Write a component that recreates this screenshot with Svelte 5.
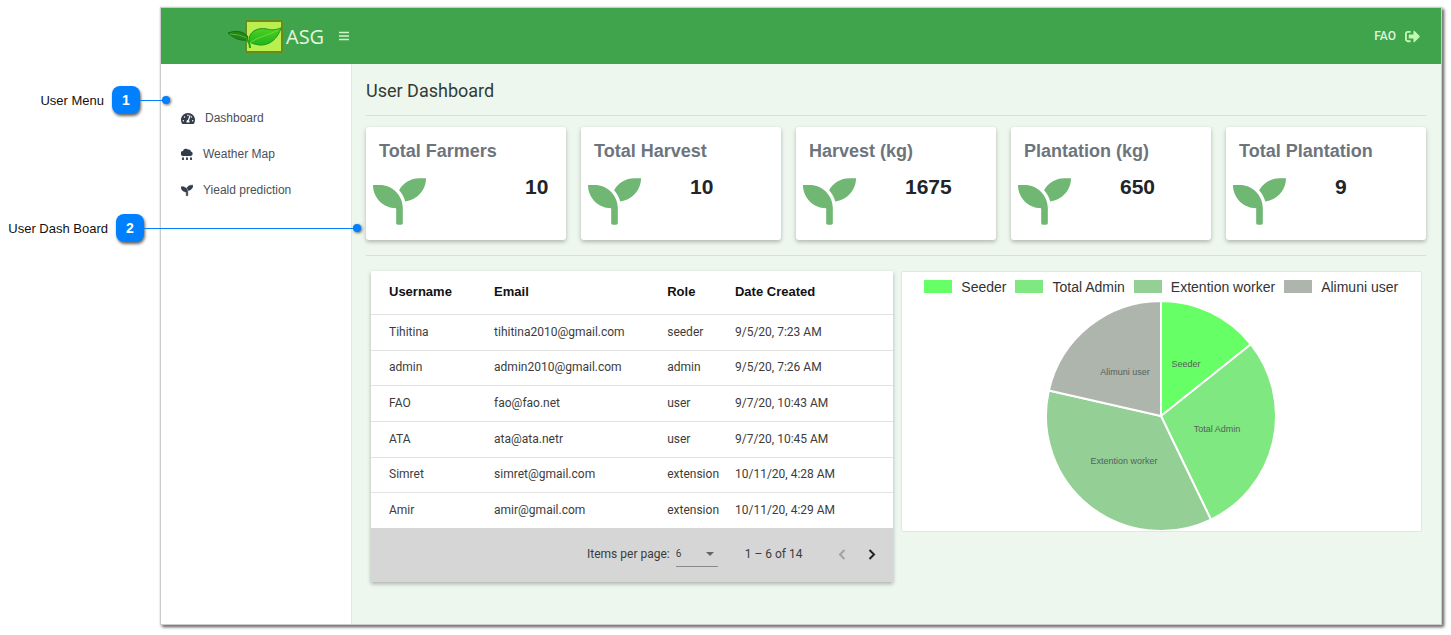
<script>
  const seedling =
    'M64 96H0c0 123.700 100.300 224 224 224v144c0 8.800 7.200 16 16 16h32c8.800 0 16-7.200 16-16V320C288 196.300 187.700 96 64 96zm384-64c-84.200 0-157.400 46.500-195.700 115.200 27.700 30.200 48.200 66.900 59 107.600C424 243.100 512 147.900 512 32h-64z';

  const stats = [
    { title: 'Total Farmers', value: '10', wide: true },
    { title: 'Total Harvest', value: '10' },
    { title: 'Harvest (kg)', value: '1675' },
    { title: 'Plantation (kg)', value: '650' },
    { title: 'Total Plantation', value: '9' }
  ];

  const users = [
    ['Tihitina', 'tihitina2010@gmail.com', 'seeder', '9/5/20, 7:23 AM'],
    ['admin', 'admin2010@gmail.com', 'admin', '9/5/20, 7:26 AM'],
    ['FAO', 'fao@fao.net', 'user', '9/7/20, 10:43 AM'],
    ['ATA', 'ata@ata.netr', 'user', '9/7/20, 10:45 AM'],
    ['Simret', 'simret@gmail.com', 'extension', '10/11/20, 4:28 AM'],
    ['Amir', 'amir@gmail.com', 'extension', '10/11/20, 4:29 AM']
  ];

  const groups = [
    { name: 'Seeder', count: 2, color: '#66ff66', x: 140, y: 66 },
    { name: 'Total Admin', count: 4, color: '#80e880', x: 171, y: 131 },
    { name: 'Extention worker', count: 5, color: '#94cf96', x: 78, y: 163 },
    { name: 'Alimuni user', count: 3, color: '#adb5ad', x: 79, y: 74 }
  ];

  const total = groups.reduce((sum, g) => sum + g.count, 0);
  const point = (n) => {
    const a = (n / total) * Math.PI * 2;
    return `${115 + 115 * Math.sin(a)} ${115 - 115 * Math.cos(a)}`;
  };
  let seen = 0;
  const slices = groups.map((g) => {
    const from = seen;
    seen += g.count;
    return { ...g, d: `M115 115L${point(from)}A115 115 0 0 1 ${point(seen)}Z` };
  });

  let pageSize = $state('6');
</script>

<div class="page">
  <div class="app">
    <header>
      <a class="logo" href="#home">
        <svg width="58" height="36" viewBox="0 0 58 36" aria-hidden="true">
          <defs>
            <linearGradient id="leaf" x1="0" y1="0" x2="0" y2="1">
              <stop offset="0" stop-color="#4fd022" />
              <stop offset="1" stop-color="#1fb51c" />
            </linearGradient>
          </defs>
          <rect x="19" y="3" width="36" height="31" rx="1" fill="#b9ef4f" stroke="#6b8a1e" stroke-width="2" />
          <path d="M1 15C8 12 17 13 21 19L20 22C12 23 7 20 1 15Z" fill="#24851c" stroke="#17701a" />
          <path d="M3 16Q12 16 20 20" fill="none" stroke="#56b62d" />
          <path d="M22 24C21 14 30 9 40 11C47 13 50 11 54 10C51 20 43 28 32 27Q26 26 22 24Z" fill="url(#leaf)" stroke="#22961f" />
          <path d="M23 25C30 19 40 18 51 12" fill="none" stroke="#6bdc3e" />
          <path d="M19 21Q23 24 23 30" fill="none" stroke="#1fa51c" stroke-width="2" />
        </svg>
        <span>ASG</span>
      </a>
      <button class="burger" aria-label="Toggle menu">
        <svg width="10" height="10" viewBox="0 0 10 10"><path d="M0 1.500h10M0 5h10M0 8.500h10" stroke="#d3f7cb" stroke-width="1.300" /></svg>
      </button>
      <a class="account" href="#logout">
        FAO
        <svg width="15" height="15" viewBox="0 0 512 512" aria-hidden="true"><path fill="#c3fab0" d="M497 273L329 441c-15 15-41 4.500-41-17v-96H152c-13.300 0-24-10.700-24-24v-96c0-13.300 10.700-24 24-24h136V88c0-21.400 25.900-32 41-17l168 168c9.300 9.400 9.300 24.600 0 34zM192 436v-40c0-6.600-5.400-12-12-12H96c-17.700 0-32-14.300-32-32V160c0-17.700 14.300-32 32-32h84c6.600 0 12-5.400 12-12V76c0-6.600-5.400-12-12-12H96c-53 0-96 43-96 96v192c0 53 43 96 96 96h84c6.600 0 12-5.400 12-12z" /></svg>
      </a>
    </header>

    <div class="body">
      <nav>
        <a href="#dashboard">
          <svg width="14" height="13" viewBox="0 0 576 512" aria-hidden="true"><path d="M288 32C128.940 32 0 160.940 0 320c0 52.800 14.250 102.260 39.060 144.800 5.610 9.620 16.300 15.200 27.440 15.200h443c11.140 0 21.830-5.580 27.440-15.200C561.750 422.260 576 372.800 576 320c0-159.060-128.940-288-288-288zm0 64c14.710 0 26.580 10.130 30.320 23.650-1.110 2.260-2.640 4.230-3.450 6.670l-9.220 27.670c-5.130 3.490-10.970 6.010-17.640 6.010-17.670 0-32-14.330-32-32S270.330 96 288 96zM96 384c-17.670 0-32-14.330-32-32s14.330-32 32-32 32 14.330 32 32-14.330 32-32 32zm48-160c-17.670 0-32-14.330-32-32s14.330-32 32-32 32 14.330 32 32-14.330 32-32 32zm246.770-72.410l-61.330 184C343.130 347.330 352 364.540 352 384c0 11.720-3.380 22.550-8.880 32H232.880c-5.500-9.450-8.880-20.280-8.880-32 0-33.940 26.500-61.430 59.900-63.590l61.340-184.010c4.170-12.560 17.730-19.450 30.360-15.170 12.570 4.190 19.350 17.790 15.170 30.360zm14.660 57.200l15.520-46.550c3.470-1.290 7.130-2.230 11.050-2.230 17.670 0 32 14.330 32 32s-14.330 32-32 32c-11.380-.010-20.890-6.280-26.570-15.220zM480 384c-17.670 0-32-14.330-32-32s14.330-32 32-32 32 14.330 32 32-14.330 32-32 32z" /></svg>
          Dashboard
        </a>
        <a href="#weather">
          <svg width="12" height="13" viewBox="0 0 24 26" aria-hidden="true">
            <path d="M5 16A5 5 0 0 1 4 6A6 6 0 0 1 14 3A5 5 0 0 1 20 7A4.600 4.600 0 0 1 19.500 16Z" />
            <path d="M4 17l2 4a2.200 2.200 0 1 1-4 0zM12 17l2 4a2.200 2.200 0 1 1-4 0zM20 17l2 4a2.200 2.200 0 1 1-4 0z" />
          </svg>
          Weather Map
        </a>
        <a href="#prediction">
          <svg width="12" height="13" viewBox="0 0 512 512" aria-hidden="true"><path d={seedling} stroke="#323c4b" stroke-width="24" /></svg>
          Yieald prediction
        </a>
      </nav>

      <main>
        <h1>User Dashboard</h1>
        <section class="stats">
          {#each stats as s}
            <article class="card">
              <h2>{s.title}</h2>
              <div class="figure">
                <svg width="53" height="53" viewBox="0 0 512 512" aria-hidden="true"><path d={seedling} /></svg>
                <strong class:wide={s.wide}>{s.value}</strong>
              </div>
            </article>
          {/each}
        </section>

        <section class="panels">
          <div class="users">
            <table>
              <colgroup><col class="c1" /><col class="c2" /><col class="c3" /><col /></colgroup>
              <thead>
                <tr><th>Username</th><th>Email</th><th>Role</th><th>Date Created</th></tr>
              </thead>
              <tbody>
                {#each users as row}
                  <tr>{#each row as cell}<td>{cell}</td>{/each}</tr>
                {/each}
              </tbody>
            </table>
            <div class="pager">
              <label for="size">Items per page:</label>
              <span class="select">
                <select id="size" bind:value={pageSize}>
                  <option>6</option>
                  <option>12</option>
                </select>
                <svg width="8" height="4" viewBox="0 0 8 4" aria-hidden="true"><path d="M0 0h8L4 4z" /></svg>
              </span>
              <span class="range">1 – 6 of 14</span>
              <button aria-label="Previous page" disabled>
                <svg width="8" height="11" viewBox="0 0 8 11"><path d="M6.500 1L2 5.500L6.500 10" /></svg>
              </button>
              <button aria-label="Next page">
                <svg width="8" height="11" viewBox="0 0 8 11"><path d="M1.500 1L6 5.500L1.500 10" /></svg>
              </button>
            </div>
          </div>

          <figure class="chart">
            <ul>
              {#each groups as g}
                <li><i style:background={g.color}></i>{g.name}</li>
              {/each}
            </ul>
            <svg width="230" height="230" viewBox="0 0 230 230" role="img" aria-label="Users by role">
              {#each slices as s}
                <path d={s.d} fill={s.color} />
              {/each}
              {#each slices as s}
                <text x={s.x} y={s.y}>{s.name}</text>
              {/each}
            </svg>
          </figure>
        </section>
      </main>
    </div>
  </div>

  <div class="callout menu"><span>User Menu</span><b>1</b><i></i></div>
  <div class="callout board"><span>User Dash Board</span><b>2</b><i></i></div>
</div>

<style>
  .page {
    position: relative;
    box-sizing: border-box;
    min-height: 100vh;
    display: flex;
    padding: 8px 10px 11px 161px;
    background: #fff;
    font-family: "Liberation Sans", Arial, sans-serif;
  }
  .app {
    flex: 1;
    min-width: 0;
    display: flex;
    flex-direction: column;
    box-shadow: 0 0 1px 1px #ccc, 2px 2px 3px 1px #555;
  }
  a { color: inherit; text-decoration: none; }
  button { border: 0; padding: 0; background: none; font: inherit; }
  svg { flex: none; display: block; }

  header {
    height: 56px;
    display: flex;
    align-items: center;
    padding: 0 21px 0 66px;
    background: #40a44d;
  }
  .logo {
    display: flex;
    align-items: center;
    gap: 1px;
    color: #e2f8df;
    font-family: "Open Sans", sans-serif;
    font-size: 20px;
    font-weight: 500;
  }
  .burger { margin-left: 15px; }
  .account {
    margin-left: auto;
    display: flex;
    align-items: center;
    gap: 9px;
    color: #def5dc;
    font-family: Roboto, sans-serif;
    font-size: 12px;
    font-weight: 500;
  }

  .body { flex: 1; display: flex; background: #edf7ee; }
  nav {
    box-sizing: border-box;
    width: 191px;
    padding: 36px 20px;
    background: #fff;
    border-right: 1px solid #dfe7e0;
    color: #4a4f5a;
    font-size: 12px;
  }
  nav a { display: flex; align-items: center; gap: 10px; height: 36px; }
  nav svg { fill: #323c4b; }

  main { flex: 1; min-width: 0; padding: 0 15px 42px 14px; }
  h1 {
    margin: 0;
    height: 51px;
    line-height: 53px;
    border-bottom: 1px solid #d6e0d7;
    color: #333b36;
    font-family: Roboto, sans-serif;
    font-size: 18px;
    font-weight: 400;
  }
  .stats {
    display: grid;
    grid-template-columns: repeat(5, 1fr);
    gap: 15px;
    padding: 11px 0 15px;
    border-bottom: 1px solid #d6e0d7;
  }
  .card {
    box-sizing: border-box;
    height: 113px;
    padding: 13px 7px;
    border-radius: 3px;
    background: #fff;
    box-shadow: 0 2px 4px rgba(0, 0, 0, .26);
  }
  h2 {
    margin: 0 6px;
    line-height: 22px;
    color: #6c757d;
    font-size: 18px;
    white-space: nowrap;
  }
  .figure { display: flex; padding-top: 13px; }
  .figure svg { fill: #6fb773; }
  strong { margin-left: 49px; color: #212529; font-size: 21px; line-height: 24px; }
  strong.wide { margin-left: 99px; }

  .panels {
    display: grid;
    grid-template-columns: 1fr 1fr;
    align-items: start;
    gap: 8px;
    padding: 15px 4px 0 5px;
  }
  .users {
    background: #fff;
    box-shadow: 0 2px 4px rgba(0, 0, 0, .28);
    font-family: Roboto, sans-serif;
    font-size: 12px;
    color: #3c3c3c;
  }
  table { width: 100%; table-layout: fixed; border-collapse: separate; border-spacing: 0; }
  .c1 { width: 23.6%; }
  .c2 { width: 33.2%; }
  .c3 { width: 13%; }
  th, td { box-sizing: border-box; padding: 0; text-align: left; white-space: nowrap; border-bottom: 1px solid #e2e2e2; }
  th { height: 44px; padding-bottom: 2px; color: #111; font-family: "Liberation Sans", Arial, sans-serif; font-size: 13px; }
  td { height: 36px; padding-bottom: 2px; }
  tbody tr:nth-child(3n + 2) td { height: 35px; }
  tbody tr:last-child td { border-bottom: 0; height: 35px; }
  th:first-child, td:first-child { padding-left: 18px; }
  .pager {
    display: flex;
    align-items: center;
    justify-content: flex-end;
    height: 52px;
    padding: 0 17px 2px 0;
    background: #d6d6d6;
  }
  .select {
    display: flex;
    align-items: center;
    width: 42px;
    margin: 0 27px 0 6px;
    padding-right: 4px;
    box-sizing: border-box;
    border-bottom: 1px solid #8a8a8a;
  }
  select {
    flex: 1;
    min-width: 0;
    height: 24px;
    padding: 0;
    border: 0;
    background: none;
    appearance: none;
    color: #3c3c3c;
    font-family: Roboto, sans-serif;
    font-size: 10px;
  }
  .range { margin-right: 35px; }
  .pager button + button { margin-left: 22px; }
  .pager button path { stroke-width: 2; fill: none; stroke: #222; }
  .pager .select path { fill: #666; }
  .pager button:disabled path { stroke: #a2a2a2; }

  .chart {
    margin: 0;
    display: flex;
    flex-direction: column;
    align-items: center;
    background: #fff;
    border: 1px solid #e1e8e1;
    border-radius: 2px;
  }
  ul {
    display: flex;
    justify-content: center;
    gap: 9px;
    height: 29px;
    margin: 0;
    padding: 0;
    list-style: none;
    color: #333;
    font-size: 14px;
  }
  li { display: flex; align-items: center; gap: 9px; white-space: nowrap; }
  li i { width: 28px; height: 13px; }
  .chart path { stroke: #fff; stroke-width: 2; stroke-linejoin: round; }
  .chart text { text-anchor: middle; font-size: 9px; fill: #56615a; }

  .callout {
    position: absolute;
    left: 0;
    display: flex;
    align-items: center;
    justify-content: flex-end;
    color: #111;
    font-size: 13px;
  }
  .callout.menu { top: 86px; width: 170px; --reach: 26px; }
  .callout.board { top: 214px; width: 361px; --reach: 213px; }
  .callout b {
    width: 28px;
    margin-left: 8px;
    line-height: 28px;
    border-radius: 8px;
    background: #0080ff;
    box-shadow: 1px 2px 3px rgba(0, 0, 0, .6);
    color: #fff;
    font-size: 14px;
    text-align: center;
  }
  .callout i { display: flex; align-items: center; }
  .callout i::before { content: ""; width: var(--reach); height: 1px; background: #0080ff; }
  .callout i::after {
    content: "";
    width: 8px;
    height: 8px;
    margin-left: -4px;
    border-radius: 50%;
    background: #0080ff;
    box-shadow: 1px 1px 3px rgba(0, 0, 0, .6);
  }
</style>
